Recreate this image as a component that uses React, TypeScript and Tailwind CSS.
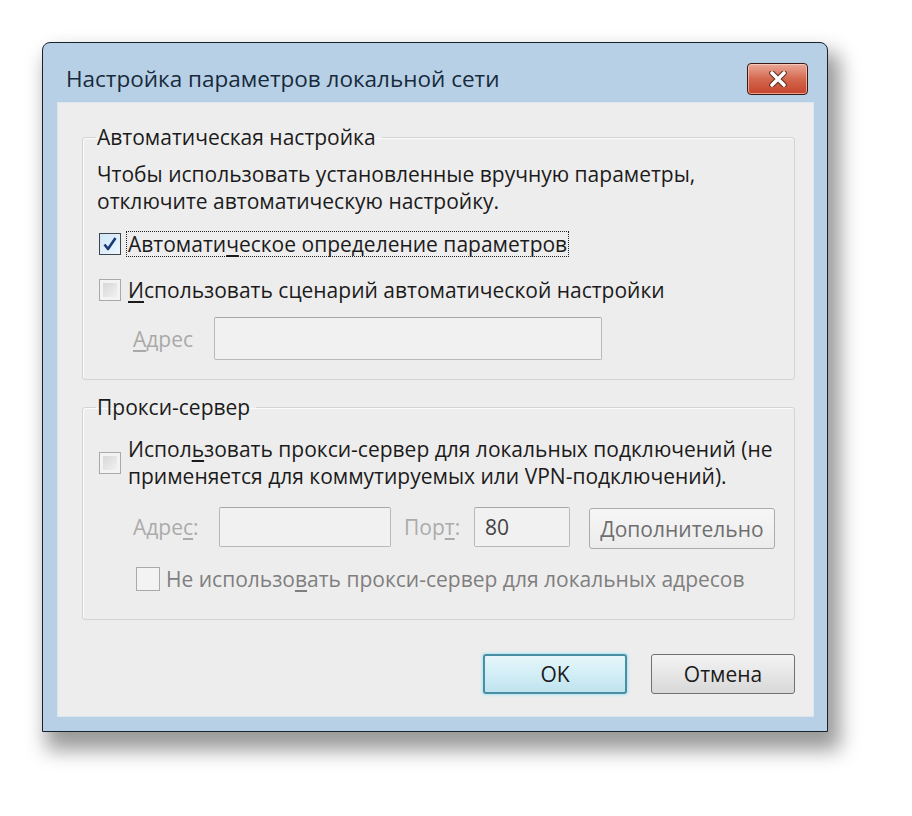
import React from 'react';

const font = { fontFamily: '"Open Sans", "Noto Sans", sans-serif' };

type BoxProps = { checked?: boolean; disabled?: boolean; plain?: boolean; className?: string };

const CheckBox: React.FC<BoxProps> = ({ checked, disabled, plain, className = '' }) => {
  if (checked) {
    return (
      <span className={`flex h-[22px] w-[22px] shrink-0 items-center justify-center border border-[#3d4650] bg-gradient-to-br from-[#cfe6f7] to-[#eef7fd] ${className}`}>
        <svg width="16" height="16" viewBox="0 0 16 16">
          <path d="M2.5 8.5 L6 13 L13.5 2" fill="none" stroke="#1b3a7a" strokeWidth="2.6" strokeLinejoin="round" />
        </svg>
      </span>
    );
  }
  return (
    <span className={`flex h-[22px] w-[22px] shrink-0 items-center justify-center border ${disabled ? 'border-[#a9a9a9]' : 'border-[#8d8d8d]'} bg-[#f3f3f3] ${className}`}>
      {!plain && <span className="h-[14px] w-[14px] bg-gradient-to-br from-[#d7d7d7] to-[#f1f1f1]" />}
    </span>
  );
};

const Field: React.FC<{ className?: string; children?: React.ReactNode }> = ({ className = '', children }) => (
  <div className={`flex items-center rounded-[2px] border border-[#b9b9b9] border-t-[#a8a8a8] bg-[#f1f1f1] px-[10px] ${className}`}>
    {children}
  </div>
);

const App: React.FC = () => {
  return (
    <div className="h-[816px] w-[912px] overflow-hidden bg-white pl-[42px] pt-[42px] text-[21px] leading-[28px] text-[#1b1b1b]" style={font}>
      {/* window */}
      <div className="w-[786px] rounded-t-[8px] border border-[#17232c] bg-[#b7d0e5] shadow-[8px_14px_20px_4px_rgba(0,0,0,0.4)]">
        {/* title bar */}
        <div className="flex items-center justify-between pb-[7px] pl-[23px] pr-[19px] pt-[20px]">
          <span className="text-[22.5px] leading-none text-[#172a3c]">Настройка параметров локальной сети</span>
          <button className="flex h-[32px] w-[61px] items-center justify-center rounded-[4px] border border-[#3b1a12] bg-gradient-to-b from-[#e9a897] via-[#d3684f] to-[#c5432b] shadow-[inset_0_0_0_1px_rgba(255,220,210,0.6)]">
            <svg width="20" height="16" viewBox="0 0 20 16">
              <path d="M4 2 L16 14 M16 2 L4 14" stroke="#5a2a20" strokeWidth="5.5" strokeLinecap="round" />
              <path d="M4 2 L16 14 M16 2 L4 14" stroke="#ffffff" strokeWidth="3.6" strokeLinecap="round" />
            </svg>
          </button>
        </div>

        {/* client area */}
        <div className="mx-[14px] mb-[14px] mr-[13px] h-[615px] border border-[#dbe6ef] bg-[#eeeded] pl-[24px] pr-[18px] pt-[21px]">
          {/* automatic configuration */}
          <fieldset className="h-[256px] rounded-[3px] border border-[#d3d3d3] px-[14px] shadow-[inset_1px_1px_0_#fbfbfb]">
            <legend className="ml-[-1px] px-[1px] pr-[6px] leading-[26px]">Автоматическая настройка</legend>
            <div className="mt-[11px] leading-[27px]">
              <div>Чтобы использовать установленные вручную параметры,</div>
              <div>отключите автоматическую настройку.</div>
            </div>
            <div className="mt-[14px] flex h-[30px] items-center pl-[2px]">
              <CheckBox checked />
              <span className="ml-[5px] border border-dotted border-[#222] px-[1px] leading-[24px]">
                Автомати<span className="underline underline-offset-[3px]">ч</span>еское определение параметров
              </span>
            </div>
            <div className="mt-[16px] flex h-[30px] items-center pl-[2px]">
              <CheckBox disabled />
              <span className="ml-[7px] leading-[24px]">
                <span className="underline underline-offset-[3px]">И</span>спользовать сценарий автоматической настройки
              </span>
            </div>
            <div className="mt-[12px] flex items-center pl-[36px]">
              <span className="w-[81px] text-[#a9a9a9]">
                <span className="underline underline-offset-[3px]">А</span>дрес
              </span>
              <Field className="h-[43px] w-[388px]" />
            </div>
          </fieldset>

          {/* proxy server */}
          <fieldset className="mt-[14px] h-[226px] rounded-[3px] border border-[#d3d3d3] px-[14px] shadow-[inset_1px_1px_0_#fbfbfb]">
            <legend className="ml-[-1px] px-[1px] pr-[6px] leading-[26px]">Прокси-сервер</legend>
            <div className="mt-[16px] flex items-center pl-[2px]">
              <CheckBox disabled />
              <div className="ml-[7px] leading-[27px]">
                <div>
                  Испол<span className="underline underline-offset-[3px]">ь</span>зовать прокси-сервер для локальных подключений (не
                </div>
                <div>применяется для коммутируемых или VPN-подключений).</div>
              </div>
            </div>
            <div className="mt-[15px] flex items-center pl-[36px]">
              <span className="w-[86px] text-[#ababab]">
                Адре<span className="underline underline-offset-[3px]">с</span>:
              </span>
              <Field className="h-[40px] w-[172px]" />
              <span className="ml-[13px] w-[70px] text-[#ababab]">
                Пор<span className="underline underline-offset-[3px]">т</span>:
              </span>
              <Field className="h-[40px] w-[96px]">
                <span className="text-[#444]">80</span>
              </Field>
              <button className="ml-[19px] mt-[3px] flex h-[41px] w-[186px] items-center justify-center rounded-[3px] border border-[#a8acae] bg-gradient-to-b from-[#f6f6f6] to-[#ececec] text-[#6f6f6f]">
                <span className="underline underline-offset-[3px]">Д</span>ополнительно
              </button>
            </div>
            <div className="mt-[16px] flex items-center pl-[39px]">
              <CheckBox disabled plain className="h-[24px] w-[24px]" />
              <span className="ml-[6px] text-[#7f7f7f]">
                Не использо<span className="underline underline-offset-[3px]">в</span>ать прокси-сервер для локальных адресов
              </span>
            </div>
          </fieldset>

          {/* buttons */}
          <div className="mt-[34px] flex justify-end gap-[24px]">
            <button className="h-[40px] w-[144px] rounded-[3px] border-2 border-[#4a8ea3] bg-gradient-to-b from-[#e6f6fa] via-[#d2eef6] to-[#bfe3ee] text-[#1b1b1b] shadow-[0_0_3px_1px_#a9e4f2]">
              OK
            </button>
            <button className="h-[40px] w-[144px] rounded-[3px] border border-[#707070] bg-gradient-to-b from-[#f4f4f4] via-[#e6e6e6] to-[#d8d8d8] text-[#1b1b1b]">
              Отмена
            </button>
          </div>
        </div>
      </div>
    </div>
  );
};

export default App;
